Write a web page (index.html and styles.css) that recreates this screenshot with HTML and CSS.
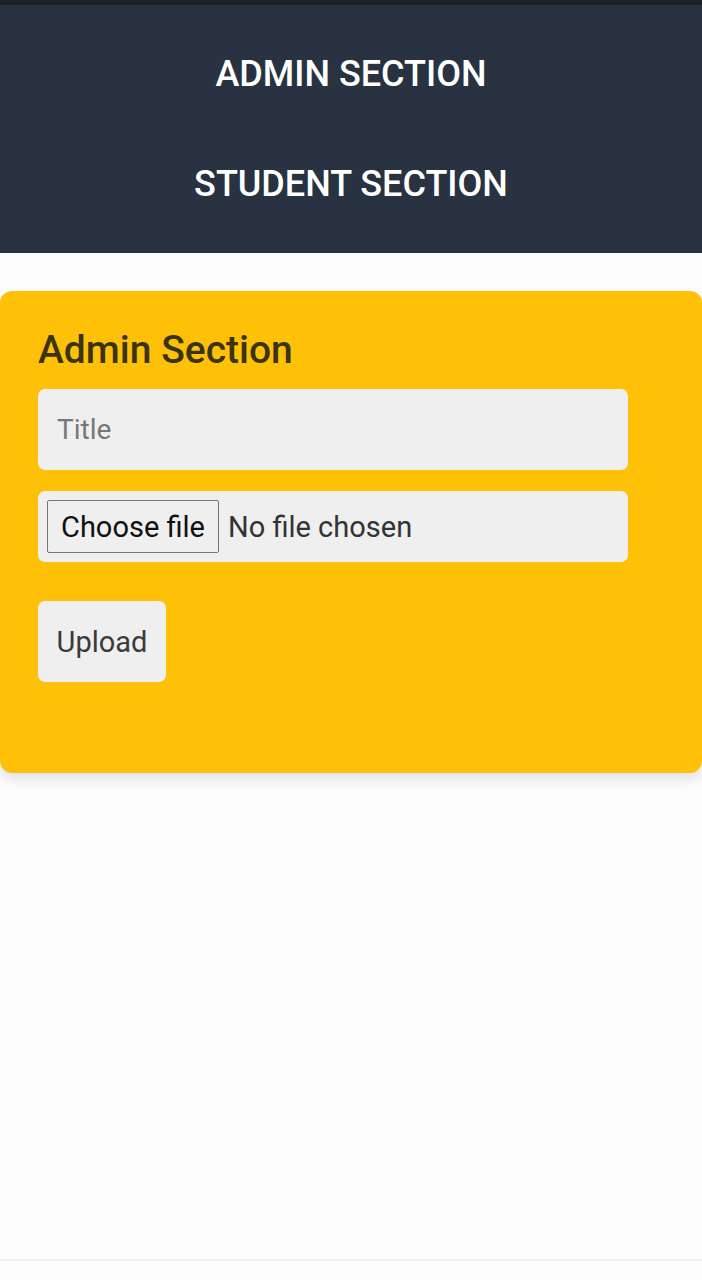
FILE: index.html
```html
<!DOCTYPE html>
<html>
<head>
<meta charset="utf-8">
<link rel="stylesheet" href="styles.css">
</head>
<body>
<div class="topbar"></div>
<nav class="nav">
  <a class="nav-link">ADMIN SECTION</a>
  <a class="nav-link">STUDENT SECTION</a>
</nav>
<main class="content">
  <section class="card">
    <h2 class="card-title">Admin Section</h2>
    <div class="field title-field"><span class="placeholder">Title</span></div>
    <div class="field file-field">
      <span class="file-btn">Choose file</span>
      <span class="file-name">No file chosen</span>
    </div>
    <div class="upload">Upload</div>
  </section>
</main>
<div class="bottom-line"></div>
</body>
</html>
```
FILE: styles.css
```css
* { box-sizing: border-box; }
html, body { margin: 0; padding: 0; }
body {
  background: #fdfdfd;
  font-family: Roboto, "Noto Sans", sans-serif;
  width: 702px;
  height: 1280px;
  display: flex;
  flex-direction: column;
}
.topbar { height: 5px; background: #1e2126; }
.nav {
  background: #283241;
  height: 248px;
  display: flex;
  flex-direction: column;
  align-items: center;
  padding-top: 51px;
  gap: 74px;
}
.nav-link {
  color: #ffffff;
  font-size: 36px;
  line-height: 36px;
  font-weight: 500;
  letter-spacing: 0;
}
.content { padding-top: 38px; flex: 1; }
.card {
  background: #fec107;
  border-radius: 12px;
  height: 482px;
  padding: 36px 74px 0 38px;
  box-shadow: 0 6px 14px rgba(0,0,0,0.12);
  display: flex;
  flex-direction: column;
  align-items: flex-start;
}
.card-title {
  margin: 0;
  font-size: 39px;
  line-height: 46px;
  font-weight: 500;
  color: #3b3414;
}
.field {
  width: 590px;
  background: #efefef;
  border-radius: 7px;
  display: flex;
  align-items: center;
}
.title-field { height: 81px; margin-top: 16px; padding-left: 19px; }
.placeholder { font-size: 28px; color: #777; }
.file-field { height: 71px; margin-top: 21px; padding-left: 9px; }
.file-btn {
  height: 53px;
  width: 172px;
  border: 1px solid #767676;
  border-radius: 2px;
  background: #efefef;
  display: flex;
  align-items: center;
  justify-content: center;
  font-size: 29px;
  color: #111;
}
.file-name { font-size: 29px; color: #333; margin-left: 9px; }
.upload {
  margin-top: 39px;
  height: 81px;
  width: 128px;
  background: #efefef;
  border-radius: 7px;
  display: flex;
  align-items: center;
  justify-content: center;
  font-size: 29px;
  color: #3a3a3a;
}
.bottom-line { height: 2px; background: #f0f0f0; margin-bottom: 19px; }
```
